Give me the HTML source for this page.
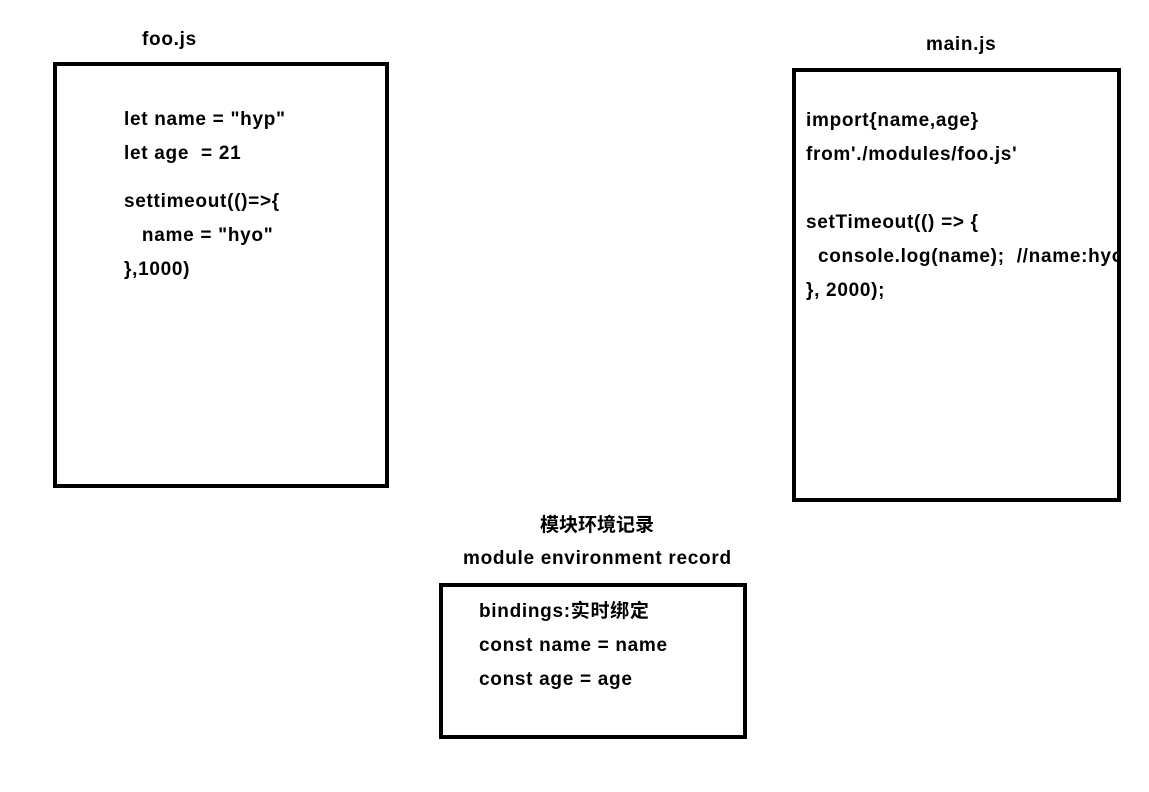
<!DOCTYPE html>
<html><head><meta charset="utf-8"><style>
html,body{margin:0;padding:0;background:#fff;width:1149px;height:792px;overflow:hidden;position:relative}
div{position:absolute}
.t{font-family:"Liberation Sans","Noto Sans CJK SC",sans-serif;font-weight:bold;font-size:19px;letter-spacing:0.7px;color:#000;white-space:pre;line-height:20px}
.b{border:4px solid #000;box-sizing:border-box}
</style></head><body>
<div class="t" style="left:142px;top:30px">foo.js</div>
<div class="b" style="left:53px;top:62px;width:336px;height:426px"></div>
<div class="t" style="left:124px;top:110px">let name = "hyp"</div>
<div class="t" style="left:124px;top:144px">let age  = 21</div>
<div class="t" style="left:124px;top:192px">settimeout(()=>{</div>
<div class="t" style="left:124px;top:226px">   name = "hyo"</div>
<div class="t" style="left:124px;top:260px">},1000)</div>

<div class="t" style="left:926px;top:35px">main.js</div>
<div class="b" style="left:792px;top:68px;width:329px;height:434px;overflow:hidden">
<div class="t" style="left:10px;top:39px">import{name,age}</div>
<div class="t" style="left:10px;top:73px">from'./modules/foo.js'</div>
<div class="t" style="left:10px;top:141px">setTimeout(() =&gt; {</div>
<div class="t" style="left:10px;top:175px">  console.log(name);  //name:hyo</div>
<div class="t" style="left:10px;top:209px">}, 2000);</div>
</div>

<div class="t" style="left:540px;top:516px;letter-spacing:0">模块环境记录</div>
<div class="t" style="left:463px;top:549px">module environment record</div>
<div class="b" style="left:439px;top:583px;width:308px;height:156px"></div>
<div class="t" style="left:479px;top:602px">bindings:实时绑定</div>
<div class="t" style="left:479px;top:636px">const name = name</div>
<div class="t" style="left:479px;top:670px">const age = age</div>
</body></html>
